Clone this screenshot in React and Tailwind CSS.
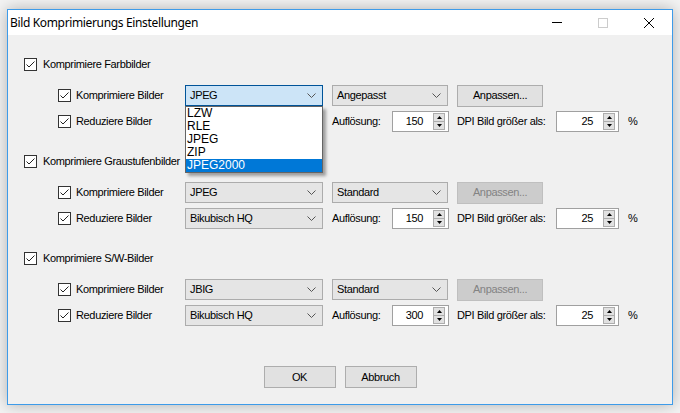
import { Fragment } from 'react'

function Check() {
  return (
    <div className="w-[13px] h-[13px] shrink-0 border border-[#333333] bg-white flex items-center justify-center">
      <svg width="11" height="11" viewBox="0 0 11 11">
        <path d="M1.5 5.5 L4 8 L9.5 2.5" fill="none" stroke="#222" strokeWidth="1" />
      </svg>
    </div>
  )
}

function Chevron() {
  return (
    <svg width="9" height="5" viewBox="0 0 9 5" className="shrink-0">
      <path d="M0.5 0.5 L4.5 4.5 L8.5 0.5" fill="none" stroke="#555" strokeWidth="1" />
    </svg>
  )
}

function Combo({ value, w, active }) {
  return (
    <div
      className={
        'h-[21px] shrink-0 flex items-center justify-between pl-[4px] pr-[6px] border ' +
        (active ? 'bg-[#cce4f7] border-[#005499]' : 'bg-[#e5e5e5] border-[#acacac]')
      }
      style={{ width: w }}
    >
      <span>{value}</span>
      <Chevron />
    </div>
  )
}

function Spin({ value, w }) {
  return (
    <div className="h-[21px] shrink-0 bg-white border border-[#a0a0a0] flex items-center" style={{ width: w }}>
      <span className="flex-1 text-right pr-[10px]">{value}</span>
      <div className="w-[12px] h-[17px] mr-[3px] border border-[#adadad] bg-[#e1e1e1] flex flex-col">
        <div className="flex-1 flex items-center justify-center border-b border-[#adadad]">
          <svg width="5" height="3" viewBox="0 0 5 3"><path d="M0 3 L2.5 0 L5 3 Z" fill="#000" /></svg>
        </div>
        <div className="flex-1 flex items-center justify-center">
          <svg width="5" height="3" viewBox="0 0 5 3"><path d="M0 0 L2.5 3 L5 0 Z" fill="#000" /></svg>
        </div>
      </div>
    </div>
  )
}

function Btn({ children, w, disabled }) {
  return (
    <div
      className={
        'h-[22px] shrink-0 border flex items-center justify-center ' +
        (disabled ? 'bg-[#cccccc] border-[#bfbfbf] text-[#838383]' : 'bg-[#e1e1e1] border-[#adadad]')
      }
      style={{ width: w }}
    >
      {children}
    </div>
  )
}

const sections = [
  { title: 'Komprimiere Farbbilder', codec: 'JPEG', quality: 'Angepasst', res: '150', open: true },
  { title: 'Komprimiere Graustufenbilder', codec: 'JPEG', quality: 'Standard', res: '150', disabled: true },
  { title: 'Komprimiere S/W-Bilder', codec: 'JBIG', quality: 'Standard', res: '300', disabled: true },
]

const options = ['LZW', 'RLE', 'JPEG', 'ZIP', 'JPEG2000']

export default function App() {
  return (
    <div className="w-[680px] h-[413px] bg-[#f3f3f3] pl-[7px] pt-[9px] text-black font-['Liberation_Sans',Arial,sans-serif]">
      <div className="w-[666px] h-[396px] border border-[#3d9be9] bg-[#f0f0f0] shadow-[0_0_14px_rgba(0,0,0,0.28)] flex flex-col">
        <div className="h-[25px] bg-white flex items-center shrink-0">
          <span className="pl-[2px] text-[12px] tracking-[-0.35px] font-['Noto_Sans',sans-serif]">Bild Komprimierungs Einstellungen</span>
          <div className="ml-auto flex h-full">
            <div className="w-[46px] flex items-center justify-center">
              <div className="w-[10px] h-px bg-black" />
            </div>
            <div className="w-[46px] flex items-center justify-center">
              <div className="w-[10px] h-[10px] border border-[#cccccc]" />
            </div>
            <div className="w-[46px] flex items-center justify-center">
              <svg width="10" height="10" viewBox="0 0 10 10">
                <path d="M0 0 L10 10 M10 0 L0 10" stroke="#000" strokeWidth="1" />
              </svg>
            </div>
          </div>
        </div>

        <div className="flex-1 flex flex-col text-[11px] tracking-[-0.35px] pt-[19px]">
          <div className="pl-[16px] flex flex-col">
            {sections.map((s, i) => (
              <Fragment key={s.title}>
                <div className={'h-[21px] flex items-center ' + (i > 0 ? 'mt-[19px]' : '')}>
                  <Check />
                  <span className="ml-[6px]">{s.title}</span>
                </div>

                <div className="h-[21px] mt-[10px] flex items-center pl-[34px]">
                  <Check />
                  <span className="ml-[5px] w-[109px] shrink-0">Komprimiere Bilder</span>
                  <div className="relative">
                    <Combo value={s.codec} w={138} active={s.open} />
                    {s.open && (
                      <div className="absolute left-0 top-[21px] w-[138px] bg-white border border-[#646464] shadow-[3px_3px_3px_rgba(0,0,0,0.35)] z-10 tracking-normal">
                        {options.map(o => (
                          <div
                            key={o}
                            className={
                              'h-[13px] leading-[13px] pl-[1px] text-[12px] ' +
                              (o === 'JPEG2000' ? 'bg-[#0078d7] text-white' : '')
                            }
                          >
                            {o}
                          </div>
                        ))}
                      </div>
                    )}
                  </div>
                  <div className="ml-[9px]">
                    <Combo value={s.quality} w={116} />
                  </div>
                  <div className="ml-[9px]">
                    <Btn w={86} disabled={s.disabled}>Anpassen...</Btn>
                  </div>
                </div>

                <div className="h-[21px] mt-[5px] flex items-center pl-[34px]">
                  <Check />
                  <span className="ml-[5px] w-[109px] shrink-0">Reduziere Bilder</span>
                  <Combo value={s.open ? '' : 'Bikubisch HQ'} w={138} />
                  <span className="ml-[9px] w-[60px] shrink-0">Auflösung:</span>
                  <Spin value={s.res} w={57} />
                  <span className="ml-[8px] w-[99px] shrink-0">DPI Bild größer als:</span>
                  <Spin value="25" w={63} />
                  <span className="ml-[9px]">%</span>
                </div>
              </Fragment>
            ))}
          </div>

          <div className="mt-[40px] flex justify-center gap-[9px]">
            <Btn w={72}>OK</Btn>
            <Btn w={72}>Abbruch</Btn>
          </div>
        </div>
      </div>
    </div>
  )
}
